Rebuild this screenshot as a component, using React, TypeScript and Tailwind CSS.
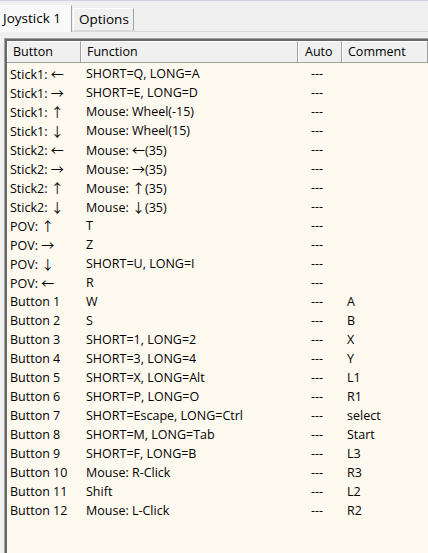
const rows: [string, string, string, string][] = [
  ["Stick1: |←", "SHORT=Q, LONG=A", "---", ""],
  ["Stick1: |→", "SHORT=E, LONG=D", "---", ""],
  ["Stick1: |↑", "Mouse: Wheel(-15)", "---", ""],
  ["Stick1: |↓", "Mouse: Wheel(15)", "---", ""],
  ["Stick2: |←", "Mouse: |←|(35)", "---", ""],
  ["Stick2: |→", "Mouse: |→|(35)", "---", ""],
  ["Stick2: |↑", "Mouse: |↑|(35)", "---", ""],
  ["Stick2: |↓", "Mouse: |↓|(35)", "---", ""],
  ["POV: |↑", "T", "---", ""],
  ["POV: |→", "Z", "---", ""],
  ["POV: |↓", "SHORT=U, LONG=I", "---", ""],
  ["POV: |←", "R", "---", ""],
  ["Button 1", "W", "---", "A"],
  ["Button 2", "S", "---", "B"],
  ["Button 3", "SHORT=1, LONG=2", "---", "X"],
  ["Button 4", "SHORT=3, LONG=4", "---", "Y"],
  ["Button 5", "SHORT=X, LONG=Alt", "---", "L1"],
  ["Button 6", "SHORT=P, LONG=O", "---", "R1"],
  ["Button 7", "SHORT=Escape, LONG=Ctrl", "---", "select"],
  ["Button 8", "SHORT=M, LONG=Tab", "---", "Start"],
  ["Button 9", "SHORT=F, LONG=B", "---", "L3"],
  ["Button 10", "Mouse: R-Click", "---", "R3"],
  ["Button 11", "Shift", "---", "L2"],
  ["Button 12", "Mouse: L-Click", "---", "R2"],
];

// pieces split by "|" — arrow glyphs get a font that has them
function Txt({ s }: { s: string }) {
  return (
    <>
      {s.split("|").map((p, i) =>
        "←→↑↓".includes(p) && p.length === 1 ? (
          <span key={i} className="font-['Noto_Sans_CJK_JP','DejaVu_Sans',sans-serif] text-[13px] leading-none">
            {p}
          </span>
        ) : (
          <span key={i}>{p}</span>
        )
      )}
    </>
  );
}

function HeaderCell({ label, className }: { label: string; className: string }) {
  return (
    <div className={`h-[21px] flex items-center border-t border-l border-white border-r border-r-[#a0a0a0] ${className}`}>
      {label}
    </div>
  );
}

export default function App() {
  return (
    <div className="w-[428px] h-[553px] overflow-hidden bg-[#f0f0f0] text-[12.5px] text-black font-['Open_Sans','DejaVu_Sans',sans-serif] leading-none">
      <div className="h-px bg-[#cdd0e0]" />
      <div className="flex items-end h-[30px] text-[13.5px]">
        <div className="h-[27px] w-[72px] flex items-center pl-[3px] bg-[#f9f9f9] border-t border-white border-r border-r-[#a0a0a0] relative top-px z-10">
          Joystick 1
        </div>
        <div className="h-[23px] w-[61px] flex items-center pl-[5px] ml-px bg-[#f0f0f0] border-t border-l border-white border-r border-r-[#a0a0a0] border-b border-b-[#d9d9d9]">
          Options
        </div>
      </div>
      <div className="border-t border-[#d9d9d9] pl-[4px] pt-[6px]">
        <div className="border-l border-t border-[#a0a0a0]">
          <div className="border-l-2 border-t-2 border-[#696969] bg-[#fffaf0] h-[600px]">
            <div className="flex bg-[#f0f0f0] border-b border-[#a0a0a0]">
              <HeaderCell label="Button" className="w-[74px] pl-[5px]" />
              <HeaderCell label="Function" className="w-[217px] pl-[5px]" />
              <HeaderCell label="Auto" className="w-[44px] pl-[6px]" />
              <HeaderCell label="Comment" className="flex-1 pl-[5px]" />
            </div>
            <div className="pt-[2px]">
              {rows.map(([btn, fn, auto, comment]) => (
                <div key={btn} className="flex h-[19px] items-center whitespace-nowrap">
                  <div className="w-[79px] pl-[3px]">
                    <Txt s={btn} />
                  </div>
                  <div className="w-[225px]">
                    <Txt s={fn} />
                  </div>
                  <div className="w-[36px]">{auto}</div>
                  <div className="flex-1">{comment}</div>
                </div>
              ))}
            </div>
          </div>
        </div>
      </div>
    </div>
  );
}
